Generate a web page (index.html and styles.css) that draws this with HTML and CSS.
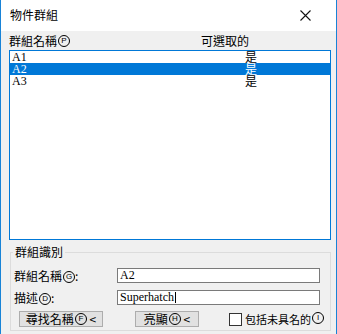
FILE: index.html
```html
<!DOCTYPE html>
<html lang="zh-Hant">

<head>
    <meta charset="UTF-8">
    <meta name="viewport" content="width=device-width, initial-scale=1.0">
    <title>物件群組</title>
    <link rel="stylesheet" href="styles.css">
</head>

<body>
    <div class="window">
        <div class="title-bar">
            <span class="title-text">物件群組</span>
            <svg class="close-icon" width="11" height="11" viewBox="0 0 11 11">
                <path d="M0.5 0.5 L10.5 10.5 M10.5 0.5 L0.5 10.5" stroke="#111" stroke-width="1.1" fill="none" />
            </svg>
        </div>

        <div class="content">
            <div class="list-header">
                <span>群組名稱<span class="key">P</span></span>
                <span>可選取的</span>
            </div>

            <div class="list-box">
                <div class="list-row"><span class="cell-name">A1</span><span class="cell-value">是</span></div>
                <div class="list-row selected"><span class="cell-name">A2</span><span class="cell-value">是</span></div>
                <div class="list-row"><span class="cell-name">A3</span><span class="cell-value">是</span></div>
            </div>

            <fieldset class="group-box">
                <legend class="group-title">群組識別</legend>
                <div class="group-body">
                    <div class="field-row">
                        <span class="field-label">群組名稱<span class="key">G</span>:</span>
                        <div class="text-input">A2</div>
                    </div>
                    <div class="field-row">
                        <span class="field-label">描述<span class="key">D</span>:</span>
                        <div class="text-input">Superhatch<span class="caret"></span></div>
                    </div>
                    <div class="button-row">
                        <button class="dlg-button find-button">尋找名稱<span class="key">F</span> &lt;</button>
                        <button class="dlg-button highlight-button">亮顯<span class="key">H</span> &lt;</button>
                        <label class="check-label"><span class="check-box"></span>包括未具名的<span class="key">I</span></label>
                    </div>
                </div>
            </fieldset>
        </div>
    </div>
</body>

</html>
```

FILE: styles.css
```css
body {
    margin: 0;
    font-family: "Noto Sans CJK TC", "Noto Sans", sans-serif;
    font-size: 12px;
    color: #000;
}

.window {
    width: 337px;
    height: 334px;
    box-sizing: border-box;
    border-left: 1px solid #1883d7;
    border-right: 1px solid #1883d7;
    background-color: #f0f0f0;
    display: flex;
    flex-direction: column;
    overflow: hidden;
}

.title-bar {
    height: 31px;
    background-color: #fff;
    display: flex;
    align-items: center;
    justify-content: space-between;
    padding: 0 25px 0 9px;
}

.title-text {
    font-size: 12px;
    line-height: 16px;
    margin-top: -1px;
}

.close-icon {
    margin-top: -1px;
}

/* circled mnemonic letter, like Ⓟ */
.key {
    display: inline-block;
    width: 10px;
    height: 10px;
    border: 1px solid currentColor;
    border-radius: 50%;
    font-family: "Liberation Sans", sans-serif;
    font-size: 8px;
    line-height: 10px;
    text-align: center;
    vertical-align: middle;
    margin: -2px 0 0 1px;
}

.content {
    padding: 0 5px 0 8px;
    display: flex;
    flex-direction: column;
}

.list-header {
    height: 19px;
    display: grid;
    grid-template-columns: 192px 1fr;
    align-items: center;
    line-height: 16px;
}

.list-box {
    height: 190px;
    box-sizing: border-box;
    border: 1px solid #0078d7;
    background-color: #fff;
}

.list-row {
    height: 12px;
    display: grid;
    grid-template-columns: 233px 1fr;
    padding-left: 2px;
    font-family: "Liberation Serif", serif;
    font-size: 12px;
    line-height: 12px;
}

.cell-value {
    font-family: "Noto Sans CJK TC", sans-serif;
    font-size: 12px;
    line-height: 11px;
}

.list-row.selected {
    background-color: #0078d7;
    color: #fff;
}

.group-box {
    margin: 4px 0 0 1px;
    padding: 0;
    border: 1px solid #dcdcdc;
    height: 87px;
    box-sizing: border-box;
}

.group-title {
    margin-left: 2px;
    padding: 0 2px;
    line-height: 16px;
}

.group-body {
    padding: 8px 0 0 3px;
    display: flex;
    flex-direction: column;
    gap: 7px;
}

.field-row {
    display: flex;
    align-items: center;
    height: 15px;
}

.field-label {
    width: 103px;
    line-height: 15px;
    white-space: nowrap;
}

.text-input {
    width: 203px;
    height: 15px;
    box-sizing: border-box;
    border: 1px solid #7a7a7a;
    background-color: #fff;
    font-family: "Liberation Serif", serif;
    font-size: 12px;
    line-height: 13px;
    padding-left: 2px;
    display: flex;
    align-items: center;
}

.caret {
    display: inline-block;
    width: 1px;
    height: 11px;
    background-color: #000;
    margin-left: 1px;
}

.button-row {
    display: flex;
    align-items: center;
    margin-top: -1px;
}

.dlg-button {
    height: 16px;
    box-sizing: border-box;
    border: 1px solid #adadad;
    background-color: #e1e1e1;
    font-family: "Noto Sans CJK TC", sans-serif;
    font-size: 12px;
    line-height: 12px;
    padding: 0;
    color: #000;
    white-space: nowrap;
}

.find-button {
    width: 84px;
    margin-left: 5px;
}

.highlight-button {
    width: 64px;
    margin-left: 32px;
}

.check-label {
    display: flex;
    align-items: center;
    margin-left: 30px;
    line-height: 13px;
    font-size: 11px;
    white-space: nowrap;
}

.check-box {
    width: 13px;
    height: 13px;
    box-sizing: border-box;
    border: 1px solid #333;
    background-color: #fff;
    margin-right: 3px;
}
```
